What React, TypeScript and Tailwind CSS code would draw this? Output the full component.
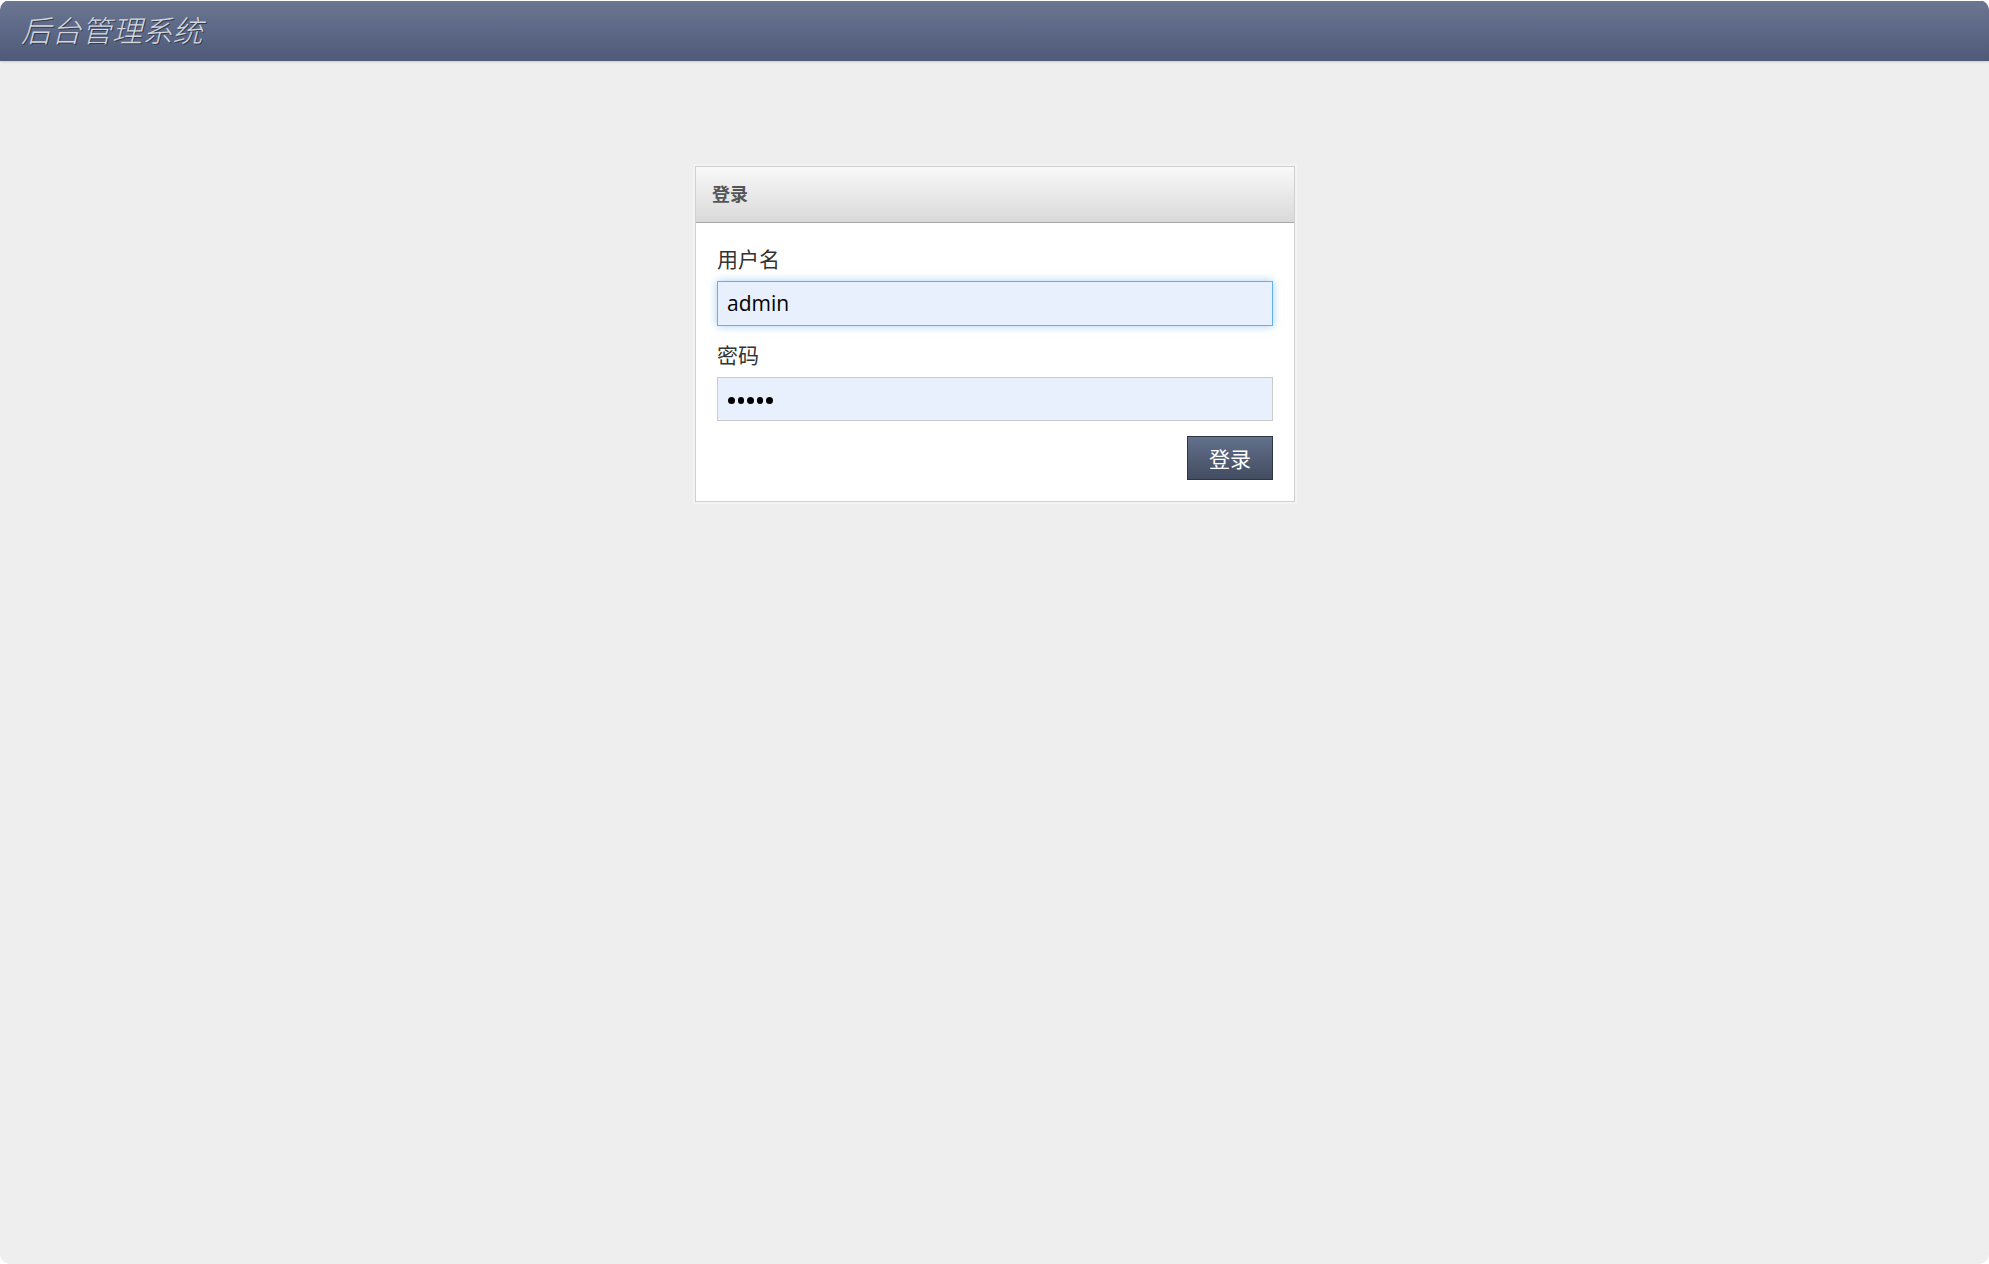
import React from "react";

const cjk = { fontFamily: '"Microsoft YaHei", "Noto Sans CJK SC", "Noto Sans", sans-serif' };

export default function App() {
  return (
    <div className="w-[1989px] h-[1264px] bg-white overflow-hidden">
      <div className="w-full h-full rounded-[10px] overflow-hidden bg-[#eeeeee] flex flex-col" style={cjk}>
        <div className="h-[61px] shrink-0 border-t border-white bg-gradient-to-b from-[#6b7693] to-[#4e5a77] flex items-center pl-[21px] shadow-[0_1px_2px_rgba(0,0,0,0.15)]">
          <span className="italic text-[30px] font-light text-[#d4d7de] tracking-[0.3px] [text-shadow:1px_1px_0_rgba(40,48,66,0.8)] leading-none mb-[5px]">
            后台管理系统
          </span>
        </div>
        <div className="flex justify-center pt-[105px] pl-px">
          <div className="w-[600px] border border-[#cfcfcf] bg-white shadow-[0_0_0_2px_#f3f3f3]">
            <div className="h-[56px] border-b border-[#a9a9a9] bg-gradient-to-b from-[#f9f9f9] to-[#d9d9d9] flex items-center pl-[16px] pb-[3px]">
              <span className="text-[18px] font-bold text-[#555]">登录</span>
            </div>
            <div className="px-[21px] pt-[21px] pb-[21px]">
              <div className="text-[21px] leading-[28px] text-[#333]">用户名</div>
              <div className="mt-[9px] h-[45px] border border-[#66afe9] bg-[#e8f0fe] shadow-[0_0_8px_rgba(102,175,233,0.6)] flex items-center px-[9px]">
                <span className="text-[21px] text-black" style={{ fontFamily: '"Segoe UI", "Open Sans", "Noto Sans", sans-serif' }}>admin</span>
              </div>
              <div className="mt-[14px] text-[21px] leading-[28px] text-[#333]">密码</div>
              <div className="mt-[9px] h-[44px] border border-[#cccccc] bg-[#e8f0fe] flex items-center px-[10px] gap-[3px] pt-[3px]">
                {[0, 1, 2, 3, 4].map((i) => (
                  <span key={i} className="w-[6.5px] h-[6.5px] rounded-full bg-black" />
                ))}
              </div>
              <div className="mt-[15px] flex justify-end">
                <button className="w-[86px] h-[44px] border border-[#2f3542] bg-gradient-to-b from-[#63718d] to-[#434c60] text-white text-[21px] leading-none">
                  登录
                </button>
              </div>
            </div>
          </div>
        </div>
      </div>
    </div>
  );
}
